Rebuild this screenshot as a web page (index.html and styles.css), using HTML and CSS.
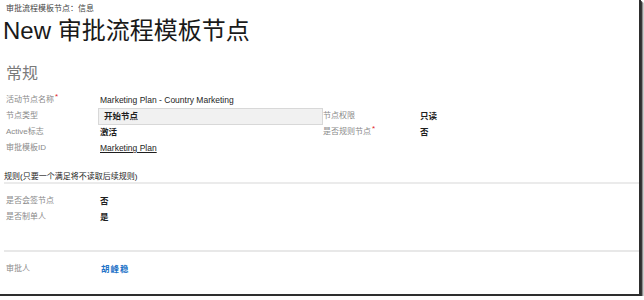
FILE: index.html
```html
<!DOCTYPE html>
<html lang="zh-CN">
<head>
<meta charset="utf-8">
<title>New 审批流程模板节点</title>
<link rel="stylesheet" href="styles.css">
</head>
<body>
<div class="frame">
  <div class="crumb">审批流程模板节点：信息</div>
  <h1 class="title">New 审批流程模板节点</h1>
  <h2 class="section">常规</h2>
  <div class="grid">
    <div class="label">活动节点名称<span class="req">*</span></div>
    <div class="value">Marketing Plan - Country Marketing</div>
    <div></div><div></div>

    <div class="label">节点类型</div>
    <div class="value"><div class="input">开始节点</div></div>
    <div class="label">节点权限</div>
    <div class="value bold">只读</div>

    <div class="label">Active标志</div>
    <div class="value bold">激活</div>
    <div class="label">是否规则节点<span class="req">*</span></div>
    <div class="value bold">否</div>

    <div class="label">审批模板ID</div>
    <div class="value link">Marketing Plan</div>
    <div></div><div></div>
  </div>

  <div class="subhead">规则(只要一个满足将不读取后续规则)</div>
  <div class="grid grid2">
    <div class="label">是否会签节点</div>
    <div class="value bold">否</div>
    <div class="label">是否制单人</div>
    <div class="value bold">是</div>
  </div>

  <div class="sep"></div>
  <div class="grid grid3">
    <div class="label">审批人</div>
    <div class="value person">胡峰稳</div>
  </div>
</div>
</body>
</html>
```

FILE: styles.css
```css
html, body {
  margin: 0;
  padding: 0;
  background: #ffffff;
}
body {
  font-family: "Liberation Sans", "Noto Sans CJK SC", sans-serif;
  color: #222;
}
.frame {
  width: 641px;
  height: 296px;
  box-sizing: border-box;
  border-right: 2px solid #2e2e2e;
  border-bottom: 2px solid #2e2e2e;
  box-shadow: 1px 1px 0 rgba(0,0,0,0.6), 2px 2px 1px rgba(0,0,0,0.35), 3px 3px 1px rgba(0,0,0,0.15);
  overflow: hidden;
  display: flex;
  flex-direction: column;
}
.crumb {
  margin: 4px 0 0 6px;
  font-size: 8px;
  line-height: 10px;
  color: #444;
}
.title {
  margin: 2px 0 0 3px;
  font-size: 24px;
  line-height: 30px;
  font-weight: normal;
  color: #1a1a1a;
}
.section {
  margin: 18px 0 0 6px;
  font-size: 16px;
  line-height: 20px;
  font-weight: normal;
  color: #7a7a7a;
}
.grid {
  margin-top: 8px;
  display: grid;
  grid-template-columns: 94px 223px 97px 1fr;
  grid-auto-rows: 16px;
  padding-left: 6px;
  align-items: center;
}
.grid2 {
  margin-top: 9px;
  grid-template-columns: 94px 1fr;
}
.grid3 {
  margin-top: 9px;
  grid-template-columns: 95px 1fr;
}
.label {
  font-size: 8px;
  line-height: 10px;
  color: #8a8a8a;
  white-space: nowrap;
}
.req {
  color: #e0242a;
  font-size: 8px;
  position: relative;
  top: -3px;
  margin-left: 1px;
}
.value {
  font-size: 8.5px;
  line-height: 10px;
  color: #1e1e1e;
  white-space: nowrap;
}
.bold {
  font-weight: bold;
}
.link {
  text-decoration: underline;
}
.input {
  margin-left: -2px;
  height: 17px;
  box-sizing: border-box;
  border: 1px solid #d8d8d8;
  background: #f1f1f1;
  padding-left: 5px;
  display: flex;
  align-items: center;
  font-weight: bold;
  font-size: 8.5px;
}
.subhead {
  margin: 15px 0 0 4px;
  font-size: 8px;
  line-height: 11px;
  height: 11px;
  color: #222;
  border-bottom: 2px solid #ebebeb;
}
.sep {
  margin: 25px 0 0 4px;
  height: 2px;
  background: #e8e8e8;
}
.person {
  color: #1f74c8;
  font-weight: bold;
  letter-spacing: 1px;
}
```
